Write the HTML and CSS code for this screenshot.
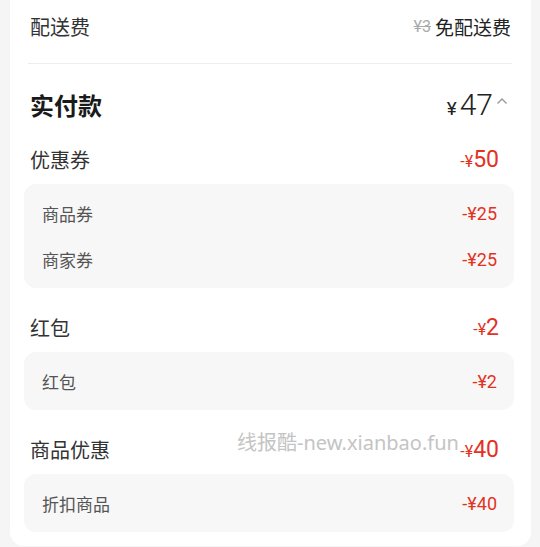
FILE: index.html
```html
<!DOCTYPE html>
<html lang="zh-CN">
<head>
    <meta charset="UTF-8">
    <meta name="viewport" content="width=device-width, initial-scale=1.0">
    <title>订单金额明细</title>
    <link rel="stylesheet" href="styles.css">
</head>

<body>

    <div class="card">
        <div class="row row-fee">
            <span class="label">配送费</span>
            <span class="fee">
                <s class="old">¥3</s>
                <span class="free">免配送费</span>
            </span>
        </div>
        <hr class="divider">

        <div class="row row-total">
            <span class="total-label">实付款</span>
            <span class="total">
                <span class="yen">¥</span><span class="num">47</span>
                <svg class="arrow" width="12" height="8" viewBox="0 0 12 8">
                    <polyline points="1.5,6.5 6,2 10.5,6.5" fill="none" stroke="#999" stroke-width="1.4"/>
                </svg>
            </span>
        </div>

        <div class="row head head-first">
            <span class="label">优惠券</span>
            <span class="minus"><small>-¥</small>50</span>
        </div>
        <div class="box">
            <div class="item">
                <span>商品券</span>
                <span class="minus-sm">-¥25</span>
            </div>
            <div class="item">
                <span>商家券</span>
                <span class="minus-sm">-¥25</span>
            </div>
        </div>

        <div class="row head">
            <span class="label">红包</span>
            <span class="minus"><small>-¥</small>2</span>
        </div>
        <div class="box">
            <div class="item">
                <span>红包</span>
                <span class="minus-sm">-¥2</span>
            </div>
        </div>

        <div class="row head">
            <span class="label">商品优惠</span>
            <span class="minus"><small>-¥</small>40</span>
        </div>
        <div class="box">
            <div class="item">
                <span>折扣商品</span>
                <span class="minus-sm">-¥40</span>
            </div>
        </div>
    </div>

    <div class="watermark">线报酷-new.xianbao.fun</div>

</body>
</html>
```

FILE: styles.css
```css
/* Detalle del pedido */
body {
    font-family: "Noto Sans CJK SC", sans-serif;
    background-color: #f5f5f5;
    margin: 0;
    padding: 0;
}

.card {
    position: relative;
    width: 490px;
    margin-left: 10px;
    padding: 0 17px 14px 14px;
    background-color: #fff;
    border-radius: 0 0 14px 14px;
}

.row {
    display: flex;
    justify-content: space-between;
    align-items: center;
    padding: 0 15px 0 6px;
}

.label {
    font-size: 20px;
    color: #333;
}

.row-fee {
    height: 52px;
    padding-right: 3px;
}

.fee {
    display: flex;
    align-items: center;
    gap: 4px;
}

.old {
    font-family: Roboto, sans-serif;
    font-size: 16px;
    color: #aaa;
}

.free {
    font-size: 19px;
    color: #222;
}

.divider {
    border: none;
    border-top: 1px solid #eee;
    margin: 11px 2px 0 4px;
}

.row-total {
    height: 48px;
    margin-top: 16px;
    padding-right: 6px;
}

.total-label {
    font-size: 24px;
    font-weight: bold;
    color: #1a1a1a;
}

.total {
    display: flex;
    align-items: baseline;
    font-family: Roboto, sans-serif;
    color: #222;
}

.yen {
    font-size: 19px;
    margin-right: 3px;
}

.num {
    font-size: 30px;
    font-weight: 300;
}

.arrow {
    margin-left: 3px;
    align-self: center;
    margin-top: -6px;
}

.head {
    height: 46px;
    margin-top: 16px;
    margin-bottom: 2px;
}

.head-first {
    margin-top: 8px;
}

.minus {
    font-family: Roboto, sans-serif;
    font-size: 23px;
    color: #e3321f;
}

.minus small {
    font-size: 16px;
}

.box {
    background-color: #f7f7f7;
    border-radius: 12px;
    padding: 6px 17px 6px 18px;
}

.item {
    display: flex;
    justify-content: space-between;
    align-items: center;
    height: 46px;
    font-size: 17px;
    color: #555;
}

.minus-sm {
    font-family: Roboto, sans-serif;
    font-size: 18px;
    color: #e3321f;
}

.watermark {
    position: absolute;
    left: 237px;
    top: 427px;
    font-family: "Noto Sans", "Noto Sans CJK SC", sans-serif;
    font-size: 20px;
    color: #c4c4c4;
}
```
